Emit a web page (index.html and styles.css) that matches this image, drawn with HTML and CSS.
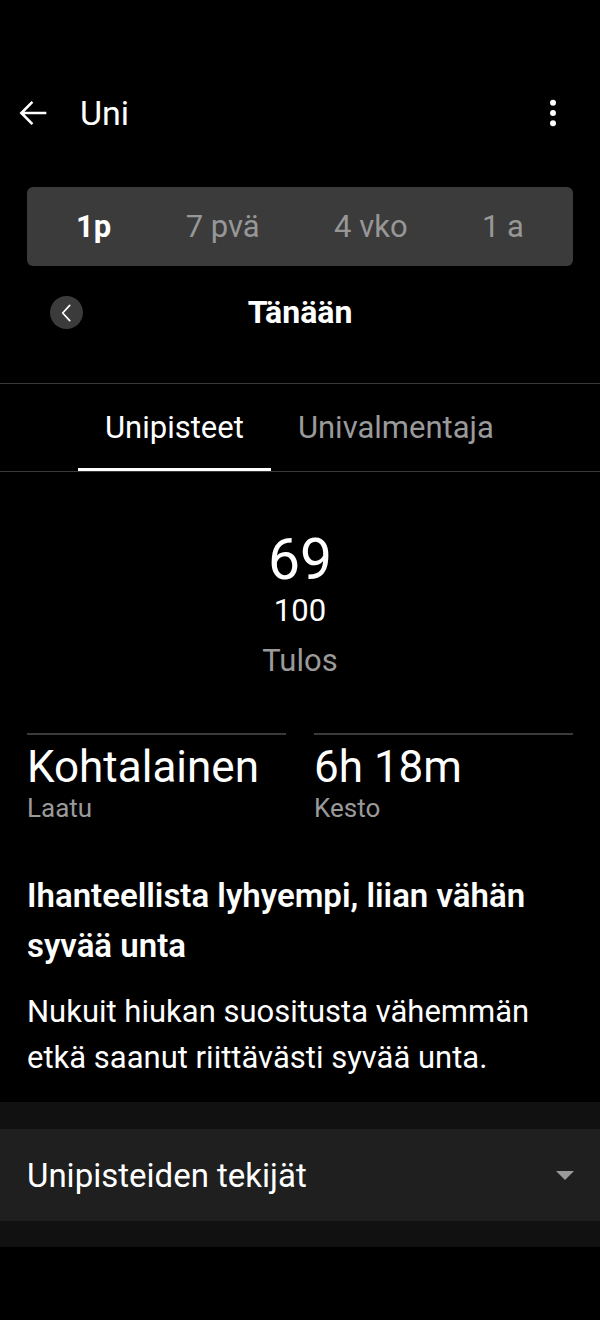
FILE: index.html
```html
<!DOCTYPE html>
<html>
<head>
    <title>Uni</title>
    <link rel="stylesheet" href="styles.css">
</head>
<body>
    <div id="app-bar">
        <svg class="icon-back" width="40" height="40" viewBox="0 0 24 24">
            <path d="M20 11.2H6.9l5.3-5.3L11.1 4.8 3.9 12l7.2 7.2 1.1-1.1-5.3-5.3H20v-1.6z" fill="#fff"/>
        </svg>
        <span class="title">Uni</span>
        <svg class="icon-more" width="34" height="34" viewBox="0 0 24 24">
            <circle cx="12" cy="4.8" r="2.1" fill="#fff"/>
            <circle cx="12" cy="12" r="2.1" fill="#fff"/>
            <circle cx="12" cy="19.2" r="2.1" fill="#fff"/>
        </svg>
    </div>

    <div id="range-toolbar">
        <div class="range active">1p</div>
        <div class="range">7 pvä</div>
        <div class="range">4 vko</div>
        <div class="range">1 a</div>
    </div>

    <div id="date-row">
        <div class="date-prev">
            <svg width="26" height="26" viewBox="0 0 24 24">
                <path d="M14.5 5l-6.5 7 6.5 7" fill="none" stroke="#fff" stroke-width="1.6" stroke-linecap="round" stroke-linejoin="round"/>
            </svg>
        </div>
        <div class="date-label">Tänään</div>
    </div>

    <div id="tabs">
        <div class="tab active">Unipisteet</div>
        <div class="tab">Univalmentaja</div>
    </div>

    <div id="score">
        <div class="score-value">69</div>
        <div class="score-max">100</div>
        <div class="score-label">Tulos</div>
    </div>

    <div id="stats">
        <div class="stat">
            <div class="stat-value">Kohtalainen</div>
            <div class="stat-label">Laatu</div>
        </div>
        <div class="stat">
            <div class="stat-value">6h 18m</div>
            <div class="stat-label">Kesto</div>
        </div>
    </div>

    <div id="summary">
        <h2>Ihanteellista lyhyempi, liian vähän syvää unta</h2>
        <p>Nukuit hiukan suositusta vähemmän etkä saanut riittävästi syvää unta.</p>
    </div>

    <div id="factors">
        <div class="factors-card">
            <span>Unipisteiden tekijät</span>
            <span class="caret"></span>
        </div>
    </div>
</body>
</html>
```

FILE: styles.css
```css
body {
    margin: 0;
    padding: 0;
    width: 600px;
    height: 1320px;
    overflow: hidden;
    background-color: #000;
    color: #fff;
    font-family: Roboto, "Noto Sans", sans-serif;
}
#app-bar {
    margin-top: 84px;
    height: 58px;
    display: flex;
    align-items: center;
    padding: 0 30px 0 13px;
}
#app-bar .title {
    margin-left: 27px;
    font-size: 34px;
    flex-grow: 1;
}
#range-toolbar {
    margin: 45px 27px 0;
    height: 79px;
    background-color: #3b3b3b;
    border-radius: 6px;
    display: flex;
    align-items: center;
    justify-content: space-between;
    padding: 0 49px;
}
.range {
    font-size: 31px;
    color: #979797;
}
.range.active {
    color: #fff;
    font-weight: bold;
}
#date-row {
    height: 48px;
    margin-top: 22px;
    display: flex;
    align-items: center;
    justify-content: center;
    position: relative;
}
.date-prev {
    position: absolute;
    left: 50px;
    top: 8px;
    width: 33px;
    height: 33px;
    border-radius: 50%;
    background-color: #3b3b3b;
    display: flex;
    align-items: center;
    justify-content: center;
}
.date-label {
    font-size: 32px;
    font-weight: bold;
}
#tabs {
    margin-top: 47px;
    border-top: 1px solid #3a3a3a;
    border-bottom: 1px solid #3a3a3a;
    height: 87px;
    display: flex;
    padding-left: 78px;
}
.tab {
    font-size: 31px;
    color: #9a9a9a;
    padding: 3px 27px 0;
    display: flex;
    align-items: center;
    border-bottom: 3px solid transparent;
}
.tab.active {
    color: #fff;
    border-bottom-color: #fff;
}
#score {
    margin-top: 58px;
    text-align: center;
}
.score-value {
    font-size: 57px;
    line-height: 60px;
}
.score-max {
    font-size: 31px;
    line-height: 42px;
}
.score-label {
    font-size: 31px;
    line-height: 58px;
    color: #9a9a9a;
}
#stats {
    margin: 43px 27px 0;
    display: flex;
    gap: 28px;
}
.stat {
    flex: 1;
    border-top: 2px solid #3a3a3a;
    padding-top: 8px;
}
.stat-value {
    font-size: 44px;
    line-height: 48px;
}
.stat-label {
    font-size: 26px;
    line-height: 34px;
    color: #9a9a9a;
}
#summary {
    padding: 46px 27px 21px;
}
#summary h2 {
    margin: 0;
    font-size: 33px;
    font-weight: 600;
    line-height: 50px;
}
#summary p {
    margin: 18px 0 0;
    font-size: 31px;
    line-height: 46px;
}
#factors {
    background-color: #111;
    padding: 27px 0 26px;
}
.factors-card {
    background-color: #1f1f1f;
    height: 92px;
    display: flex;
    align-items: center;
    justify-content: space-between;
    padding: 0 26px 0 27px;
    font-size: 33px;
}
.caret {
    width: 0;
    height: 0;
    border-left: 9px solid transparent;
    border-right: 9px solid transparent;
    border-top: 9px solid #9a9a9a;
}
```
